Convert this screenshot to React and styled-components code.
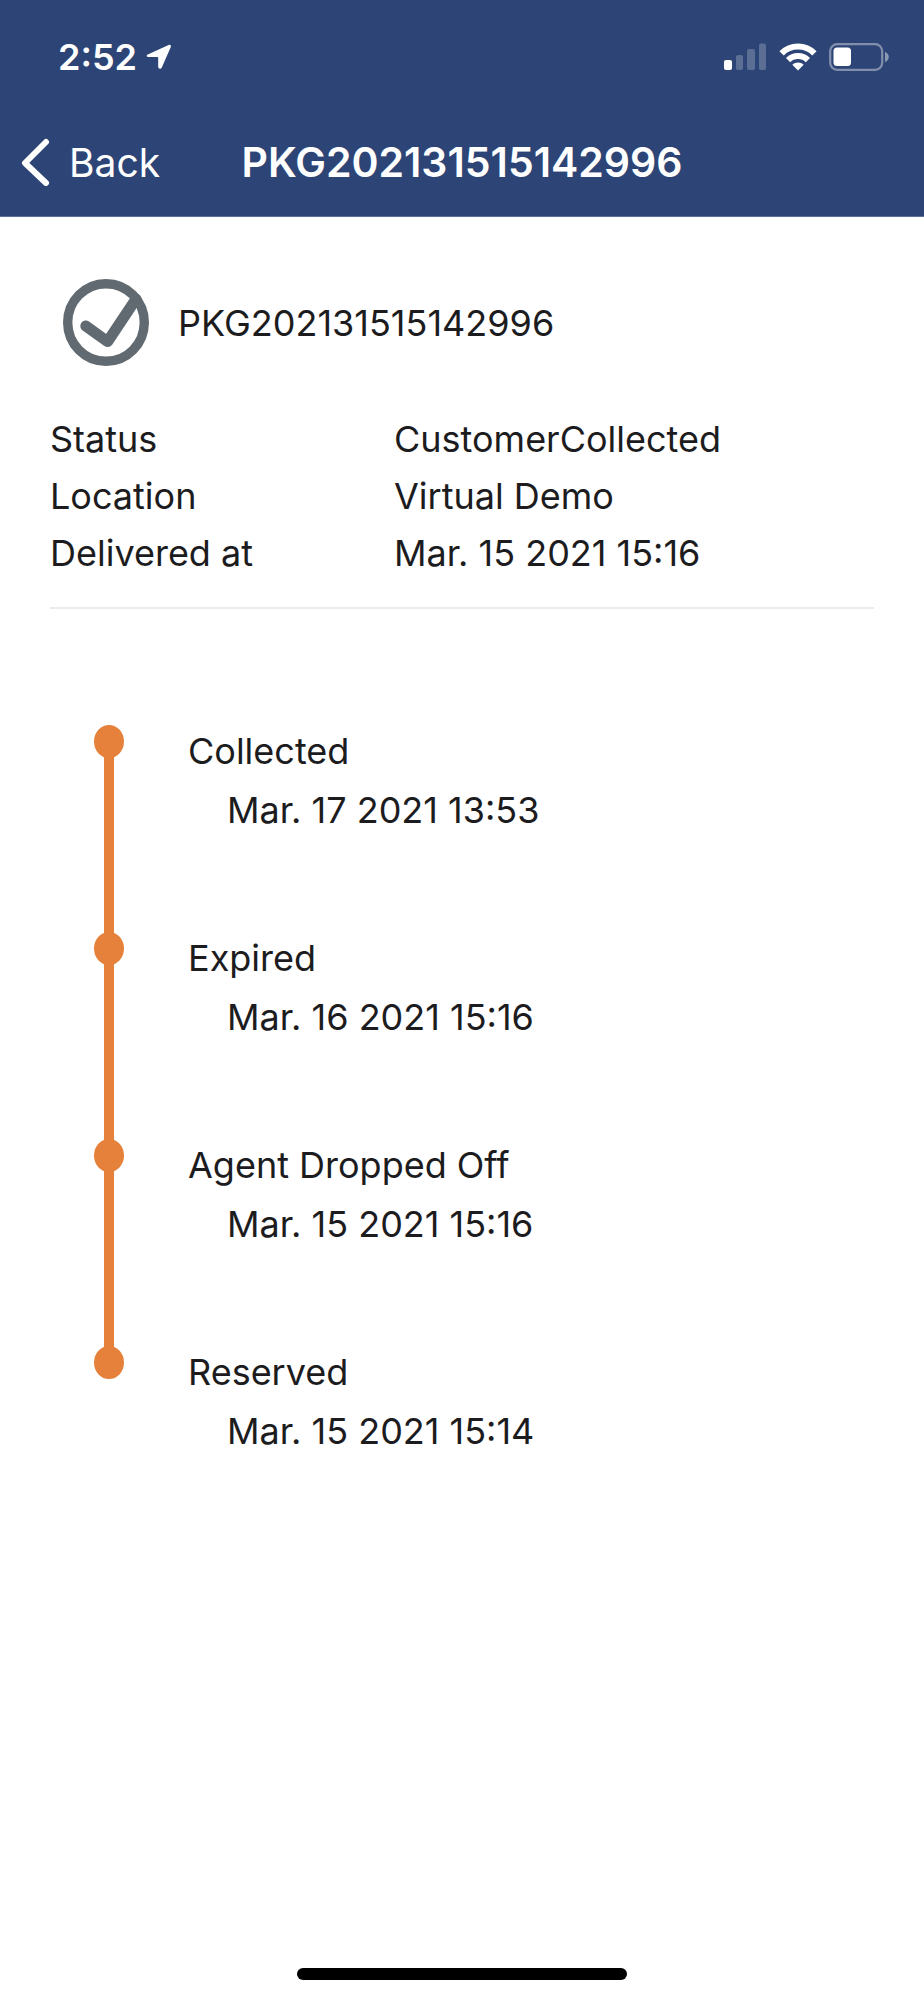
import React from 'react'
import styled, { createGlobalStyle } from 'styled-components'

const GlobalStyle = createGlobalStyle`
  * {
    box-sizing: border-box;
  }
  body {
    margin: 0;
    background: #fff;
    color: #1c1c1e;
    font-family: Inter, 'Liberation Sans', sans-serif;
    font-size: 36px;
  }
`

const Screen = styled.div`
  display: flex;
  flex-direction: column;
  min-height: 100vh;
`

const Header = styled.header`
  background: #2d4576;
  border-bottom: 1px solid #5c6f97;
  color: #fff;
`

const StatusBar = styled.div`
  display: flex;
  justify-content: space-between;
  align-items: center;
  height: 108px;
  padding: 6px 34px 0 58px;
`

const StatusGroup = styled.div`
  display: flex;
  align-items: center;
  gap: ${props => props.gap}px;
`

const Time = styled.span`
  font-weight: 600;
  line-height: 44px;
`

const NavBar = styled.nav`
  display: grid;
  grid-template-columns: 1fr auto 1fr;
  align-items: center;
  height: 108px;
  padding: 0 21px;
`

const BackLink = styled.a`
  display: flex;
  align-items: center;
  gap: 18px;
  color: inherit;
  font-size: 39px;
  text-decoration: none;
`

const Title = styled.h1`
  margin: 0;
  font-size: 41px;
  font-weight: 600;
`

const Main = styled.main`
  flex: 1;
  padding: 62px 50px 0;
`

const PackageRow = styled.div`
  display: flex;
  align-items: center;
  gap: 28px;
  padding-left: 13px;
`

const PackageName = styled.h2`
  margin: 0;
  font-size: 36px;
  font-weight: 400;
`

const Details = styled.dl`
  display: grid;
  grid-template-columns: 344fr 480fr;
  margin: 45px 0 0;
  padding-bottom: 25px;
  border-bottom: 2px solid #ebebeb;
  line-height: 57px;
`

const Term = styled.dt`
  margin: 0;
`

const Value = styled.dd`
  margin: 0;
`

const Timeline = styled.ol`
  margin: 113px 0 0;
  padding: 0 0 0 44px;
  list-style: none;
`

const Event = styled.li`
  display: flex;
  gap: 64px;
  min-height: 207px;
`

const Track = styled.div`
  display: flex;
  flex-direction: column;
  align-items: center;
  width: 30px;
  margin: 3px 0 -3px;
`

const Dot = styled.div`
  flex: none;
  width: 30px;
  height: 33px;
  border-radius: 50%;
  background: #e5813a;
`

const Line = styled.div`
  flex: 1;
  width: 10px;
  margin: -2px 0;
  background: #e5813a;
`

const EventText = styled.div`
  line-height: 59px;
`

const EventDate = styled.time`
  display: block;
  padding-left: 39px;
`

const HomeBar = styled.div`
  width: 330px;
  height: 12px;
  margin: 20px auto;
  border-radius: 6px;
  background: #000;
`

const details = [
  { term: 'Status', value: 'CustomerCollected' },
  { term: 'Location', value: 'Virtual Demo' },
  { term: 'Delivered at', value: 'Mar. 15 2021 15:16' },
]

const events = [
  { name: 'Collected', date: 'Mar. 17 2021 13:53' },
  { name: 'Expired', date: 'Mar. 16 2021 15:16' },
  { name: 'Agent Dropped Off', date: 'Mar. 15 2021 15:16' },
  { name: 'Reserved', date: 'Mar. 15 2021 15:14' },
]

const LocationIcon = () => (
  <svg width="26" height="26" viewBox="0 0 26 26" aria-hidden="true">
    <path
      d="M1.8 10.4 22.6 1C24.2.3 25.4 1.4 24.8 3L15.8 23.4C15 25.3 12.2 25 12.2 22.8V13.8Q12.2 13 11.4 13H2.6C.6 13 .1 11.200 1.8 10.4Z"
      fill="#fff"
    />
  </svg>
)

const SignalIcon = () => (
  <svg width="43" height="28" viewBox="0 0 43 28" aria-hidden="true">
    <rect x="0" y="17" width="8" height="10" rx="2" fill="#fff" />
    <g fill="#fff" opacity="0.22">
      <rect x="12" y="12" width="7" height="15" rx="2" />
      <rect x="23" y="6" width="8" height="21" rx="2" />
      <rect x="35" y="0.5" width="7" height="26.5" rx="2" />
    </g>
  </svg>
)

const WifiIcon = () => (
  <svg width="38" height="28" viewBox="0 0 38 28" aria-hidden="true">
    <g fill="none" stroke="#fff" strokeWidth="6">
      <path d="M2.6 10.3C11.5 1.2 26.5 1.2 35.4 10.3" />
      <path d="M9.1 17.1C14.5 11.7 23.5 11.7 28.9 17.1" />
    </g>
    <path d="M19 27.5 13.3 21.7C16.5 18.9 21.5 18.9 24.7 21.7Z" fill="#fff" />
  </svg>
)

const BatteryIcon = () => (
  <svg width="61" height="28" viewBox="0 0 61 28" aria-hidden="true">
    <rect
      x="1.2"
      y="1.2"
      width="52"
      height="25.6"
      rx="7"
      fill="none"
      stroke="#fff"
      strokeOpacity="0.4"
      strokeWidth="2.2"
    />
    <rect x="4.5" y="4.5" width="17.5" height="18.5" rx="3.5" fill="#fff" />
    <path d="M56 9C61 10.5 61 17.5 56 19Z" fill="#fff" opacity="0.45" />
  </svg>
)

const ChevronIcon = () => (
  <svg width="30" height="48" viewBox="0 0 30 48" aria-hidden="true">
    <path
      d="M25 4 4 25 25 45"
      fill="none"
      stroke="#fff"
      strokeWidth="6"
      strokeLinecap="round"
      strokeLinejoin="round"
    />
  </svg>
)

const CheckCircleIcon = () => (
  <svg width="87" height="87" viewBox="0 0 87 87" aria-hidden="true">
    <g fill="none" stroke="#616a70" strokeLinejoin="round">
      <ellipse cx="43" cy="43.5" rx="38.3" ry="38.8" strokeWidth="9.4" />
      <path d="M22.8 47 44.6 62.6 73 20" strokeWidth="11" strokeLinecap="round" />
    </g>
  </svg>
)

const App = () => (
  <Screen>
    <GlobalStyle />
    <Header>
      <StatusBar>
        <StatusGroup gap={9}>
          <Time>2:52</Time>
          <LocationIcon />
        </StatusGroup>
        <StatusGroup gap={12}>
          <SignalIcon />
          <WifiIcon />
          <BatteryIcon />
        </StatusGroup>
      </StatusBar>
      <NavBar>
        <BackLink href="#">
          <ChevronIcon />
          Back
        </BackLink>
        <Title>PKG202131515142996</Title>
      </NavBar>
    </Header>
    <Main>
      <PackageRow>
        <CheckCircleIcon />
        <PackageName>PKG202131515142996</PackageName>
      </PackageRow>
      <Details>
        {details.map(({ term, value }) => (
          <React.Fragment key={term}>
            <Term>{term}</Term>
            <Value>{value}</Value>
          </React.Fragment>
        ))}
      </Details>
      <Timeline>
        {events.map(({ name, date }, i) => (
          <Event key={name}>
            <Track>
              <Dot />
              {i < events.length - 1 && <Line />}
            </Track>
            <EventText>
              {name}
              <EventDate>{date}</EventDate>
            </EventText>
          </Event>
        ))}
      </Timeline>
    </Main>
    <HomeBar />
  </Screen>
)

export default App
